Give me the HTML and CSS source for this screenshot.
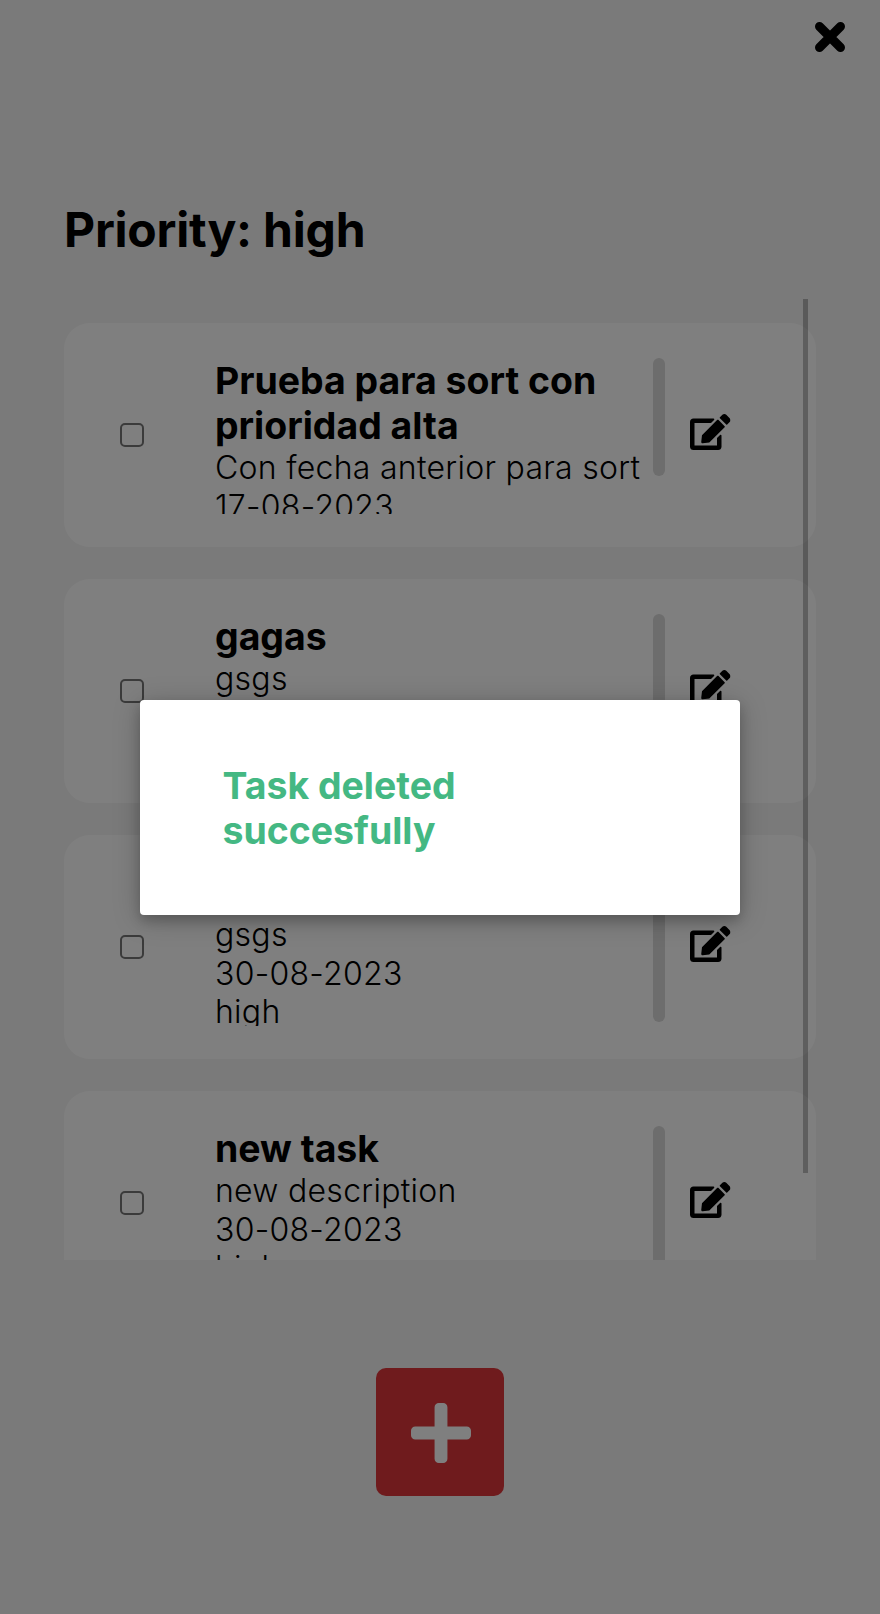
FILE: index.html
```html
<!DOCTYPE html>
<html lang="en">
<head>
<meta charset="utf-8">
<title>Tasks</title>
<link rel="stylesheet" href="styles.css">
</head>
<body>
<svg class="defs" aria-hidden="true">
  <symbol id="edit" viewBox="0 0 576 512"><path d="M402.6 83.2l90.2 90.2c3.8 3.8 3.8 10 0 13.800L274.400 405.600l-92.800 10.300c-12.400 1.400-22.900-9.100-21.500-21.500l10.300-92.800L388.800 83.200c3.800-3.800 10-3.800 13.800 0zm162-22.900l-48.800-48.800c-15.200-15.200-39.900-15.200-55.200 0l-35.400 35.400c-3.800 3.800-3.800 10 0 13.800l90.200 90.200c3.800 3.800 10 3.800 13.800 0l35.400-35.400c15.200-15.300 15.200-40 0-55.200zM384 346.200V448H64V128h229.800c3.200 0 6.200-1.300 8.500-3.500l40-40c7.600-7.600 2.200-20.500-8.500-20.500H48C21.500 64 0 85.500 0 112v352c0 26.500 21.500 48 48 48h352c26.500 0 48-21.500 48-48V306.200c0-10.700-12.900-16-20.500-8.500l-40 40c-2.200 2.300-3.500 5.300-3.500 8.500z"/></symbol>
</svg>
<div class="page">
  <header class="topbar">
    <svg class="close" viewBox="0 0 30 30"><path d="M4.500 4.500l21 21M25.500 4.500l-21 21"/></svg>
  </header>
  <h1 class="title">Priority: high</h1>
  <main class="list">
    <article class="card">
      <span class="check"></span>
      <div class="info"><h3>Prueba para sort con prioridad alta</h3><p>Con fecha anterior para sort</p><p>17-08-2023</p><p>high</p></div>
      <div class="track"><i class="thumb short"></i></div>
      <svg class="edit"><use href="#edit"/></svg>
    </article>
    <article class="card">
      <span class="check"></span>
      <div class="info"><h3>gagas</h3><p>gsgs</p><p>30-08-2023</p><p>high</p></div>
      <div class="track"><i class="thumb"></i></div>
      <svg class="edit"><use href="#edit"/></svg>
    </article>
    <article class="card">
      <span class="check"></span>
      <div class="info"><h3>gagas</h3><p>gsgs</p><p>30-08-2023</p><p>high</p></div>
      <div class="track"><i class="thumb"></i></div>
      <svg class="edit"><use href="#edit"/></svg>
    </article>
    <article class="card">
      <span class="check"></span>
      <div class="info"><h3>new task</h3><p>new description</p><p>30-08-2023</p><p>high</p></div>
      <div class="track"><i class="thumb"></i></div>
      <svg class="edit"><use href="#edit"/></svg>
    </article>
    <i class="scrollbar"></i>
  </main>
  <button class="add" aria-label="Add task"><svg viewBox="0 32 448 448"><path d="M416 208H272V64c0-17.670-14.330-32-32-32h-32c-17.670 0-32 14.330-32 32v144H32c-17.670 0-32 14.330-32 32v32c0 17.670 14.330 32 32 32h144v144c0 17.670 14.330 32 32 32h32c17.670 0 32-14.330 32-32V304h144c17.670 0 32-14.330 32-32v-32c0-17.670-14.330-32-32-32z"/></svg></button>
</div>
<div class="overlay">
  <div class="dialog"><h3>Task deleted succesfully</h3></div>
</div>
</body>
</html>
```
FILE: styles.css
```css
* { box-sizing: border-box; }
body { margin: 0; background: #f5f5f5; color: #000; font-family: Inter, "Liberation Sans", sans-serif; }
h1, h3, p { margin: 0; }
.defs { display: none; }
.page { height: 1614px; padding: 0 64px; display: flex; flex-direction: column; overflow: hidden; }
.topbar { display: flex; justify-content: flex-end; height: 201px; padding-top: 22px; margin-right: -29px; flex: none; }
.close { width: 30px; height: 30px; fill: none; stroke: #000; stroke-width: 9; stroke-linecap: round; }
.title { font-size: 48px; line-height: 58px; font-weight: 700; letter-spacing: -.22px; flex: none; }
.list { position: relative; height: 961px; margin-top: 40px; padding-top: 24px; display: flex; flex-direction: column; gap: 32px; overflow: hidden; flex: none; }
.card { height: 224px; flex: none; display: flex; align-items: center; background: #fff; border-radius: 26px; padding-left: 56px; }
.check { width: 24px; height: 24px; border: 2px solid #767676; border-radius: 5px; }
.info { width: 438px; height: 158px; margin-left: 71px; padding-top: 2px; overflow: hidden; }
h3 { font-size: 37.440px; line-height: 45px; font-weight: 700; }
.info h3 { margin-bottom: 1px; }
.info p { font-size: 32px; line-height: 38.700px; font-weight: 300; letter-spacing: .28px; white-space: nowrap; }
.track { width: 12px; height: 156px; }
.thumb { display: block; height: 152px; margin-top: 1px; border-radius: 6px; background: #dadada; }
.thumb.short { height: 118px; }
.edit { width: 40.500px; height: 36px; margin: -7px 0 0 25.300px; }
.scrollbar { position: absolute; left: 739px; top: 0; width: 5px; height: 874px; background: rgba(0,0,0,.26); }
.add { align-self: center; flex: none; width: 128px; height: 128px; margin-top: 108px; padding: 1px 0 0 1px; border: 0; border-radius: 10px; background: #de363a; display: flex; align-items: center; justify-content: center; }
.add svg { width: 60px; height: 60px; fill: #fff; }
.overlay { position: absolute; inset: 0; height: 1614px; padding-top: 700px; background: rgba(0,0,0,.5); display: flex; align-items: flex-start; justify-content: center; }
.dialog { width: 600px; height: 214.700px; padding: 63px 82.500px; background: #fff; border-radius: 4px; box-shadow: 0 6px 12px rgba(0,0,0,.18), 0 4px 28px rgba(0,0,0,.22); }
.dialog h3 { width: 300px; color: #44b883; }
```
